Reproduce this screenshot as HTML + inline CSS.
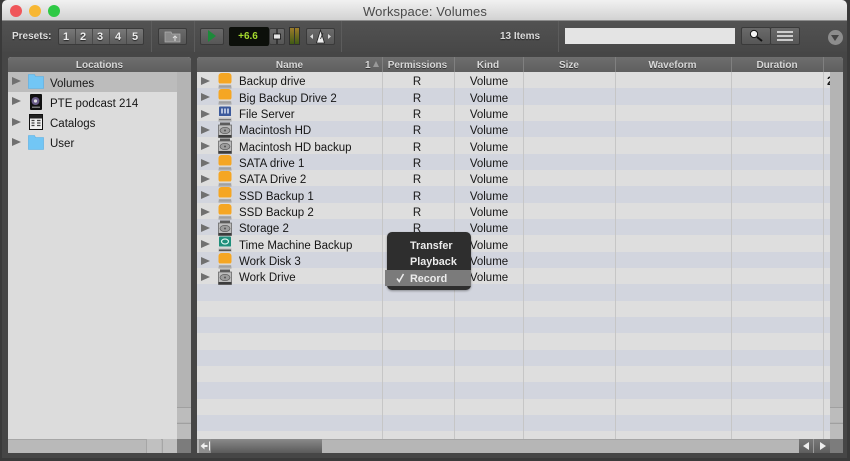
<!DOCTYPE html>
<html><head><meta charset="utf-8"><style>
*{box-sizing:border-box}
html,body{margin:0;padding:0;width:850px;height:461px;overflow:hidden;background:#3a3a3a}
body{font-family:"Liberation Sans",sans-serif;position:relative}
.a{position:absolute}
#w{position:absolute;left:0;top:0;width:850px;height:461px;overflow:hidden;filter:blur(.3px)}
.t{position:absolute;white-space:nowrap;line-height:14px;height:14px}
.l{font-size:11.5px;color:#161616;margin-top:2px}
.c{font-size:11.5px;color:#161616;text-align:center;margin-top:2px}
.h{font-size:10px;font-weight:bold;color:#d8d8d8;text-align:center;top:59px;text-shadow:0 1px 0 #333}
.b{position:absolute;background:linear-gradient(#6a6a6a,#565656);border:1px solid #3a3a3a;border-radius:2px}
.n{position:absolute;top:29px;height:15px;width:16px;text-align:center;color:#eee;font-size:11px;font-weight:bold;line-height:16px;text-shadow:0 1px 1px #222}
.r{position:absolute;left:197px;width:646px;height:16.33px}
.s{position:absolute;top:72px;height:367px;width:1px;background:#c6c6c6}
.ar{position:absolute;width:0;height:0;border-left:9px solid #707070;border-top:4.500px solid transparent;border-bottom:4.500px solid transparent}
.ic{position:absolute;width:14px;height:16px}
.p{position:absolute;left:410px;font-size:10.8px;font-weight:bold;color:#ececec;line-height:14px;margin-top:1px}
</style></head><body><div id="w">
<svg width="0" height="0" style="position:absolute"><defs>
<linearGradient id="gb" x1="0" y1="0" x2="0" y2="1"><stop offset="0" stop-color="#e6e6e6"/><stop offset="1" stop-color="#9c9c9c"/></linearGradient>
<symbol id="or" viewBox="0 0 14 16"><rect x="0.500" y="0" width="13" height="11.500" rx="3" fill="#f5a623"/><rect x="0.500" y="10.500" width="13" height="5" fill="url(#gb)"/><rect x="1" y="12.500" width="12" height="1" fill="#8c8c8c"/></symbol>
<symbol id="hd" viewBox="0 0 14 16"><rect x="2" y="0.500" width="10" height="3" fill="#5c5c5c"/><rect x="0.500" y="3" width="13" height="12.500" fill="#bdbdbd" stroke="#5c5c5c" stroke-width=".7"/><ellipse cx="7" cy="8.500" rx="5" ry="3.200" fill="#9c9c9c" stroke="#555" stroke-width=".7"/><circle cx="7" cy="8.500" r="1" fill="#555"/><rect x="0.500" y="13" width="13" height="2.500" fill="#3c3c3c"/></symbol>
<symbol id="sv" viewBox="0 0 14 16"><rect x="1" y="0.500" width="12" height="10" rx="1" fill="#3c5a9c"/><path d="M4 2.500v5M7 2.500v5M10 2.500v5" stroke="#dfe6f5" stroke-width="1.500"/><rect x="0.500" y="10" width="13" height="5.500" fill="url(#gb)"/><rect x="1" y="13" width="12" height="1" fill="#777"/></symbol>
<symbol id="tm" viewBox="0 0 14 16"><rect x="1" y="0.500" width="12" height="10.500" rx="1" fill="#1f8f7c"/><ellipse cx="7" cy="5.500" rx="3.500" ry="2.500" fill="none" stroke="#d8f3ec" stroke-width="1.200"/><rect x="0.500" y="10.500" width="13" height="5" fill="url(#gb)"/><rect x="1" y="13.500" width="12" height="1.500" fill="#555"/></symbol>
<symbol id="fo" viewBox="0 0 16 15"><path d="M0.500 0.500h6l1 2h8v12h-15z" fill="#72c6f5" stroke="#55ade4" stroke-width=".6"/></symbol>
</defs></svg>

<!-- window -->
<div class="a" style="left:2px;top:0;width:845px;height:458px;background:#464646;border-radius:5px 5px 0 0"></div>
<div class="a" style="left:2px;top:0;width:845px;height:21px;background:linear-gradient(#f1f1f1,#d2d2d2);border-radius:5px 5px 0 0;border-bottom:1px solid #8c8c8c"></div>
<div class="a" style="left:10px;top:5px;width:12px;height:12px;border-radius:50%;background:#f0565a"></div>
<div class="a" style="left:29px;top:5px;width:12px;height:12px;border-radius:50%;background:#f7b733"></div>
<div class="a" style="left:48px;top:5px;width:12px;height:12px;border-radius:50%;background:#2fc945"></div>
<div class="t" style="left:300px;width:250px;top:5px;text-align:center;font-size:13px;color:#4a4a4a;letter-spacing:.12px">Workspace: Volumes</div>

<!-- toolbar -->
<div class="a" style="left:2px;top:21px;width:845px;height:31px;background:linear-gradient(#525252,#474747)"></div>
<div class="t" style="left:12px;top:30px;font-size:10px;font-weight:bold;color:#e0e0e0;text-shadow:0 1px 1px #222">Presets:</div>
<div class="b" style="left:58px;top:28px;width:86px;height:17px;background:linear-gradient(#787878,#5c5c5c)"></div>
<div class="n" style="left:58px">1</div><div class="n" style="left:75px">2</div><div class="n" style="left:92px">3</div><div class="n" style="left:110px">4</div><div class="n" style="left:127px">5</div>
<div class="a" style="left:75px;top:29px;width:1px;height:15px;background:#4a4a4a"></div><div class="a" style="left:92px;top:29px;width:1px;height:15px;background:#4a4a4a"></div><div class="a" style="left:109px;top:29px;width:1px;height:15px;background:#4a4a4a"></div><div class="a" style="left:126px;top:29px;width:1px;height:15px;background:#4a4a4a"></div>
<div class="a" style="left:151px;top:21px;width:1px;height:31px;background:#5c5c5c"></div>
<div class="b" style="left:158px;top:28px;width:29px;height:17px"></div>
<svg class="a" style="left:164px;top:29px" width="17" height="15" viewBox="0 0 17 15"><path d="M1 3h6l1 2h8v8H1z" fill="#8a8a8a" stroke="#b0b0b0" stroke-width=".7"/><path d="M11 12V7M9 9l2-2 2 2" stroke="#ddd" fill="none" stroke-width="1"/></svg>
<div class="a" style="left:194px;top:21px;width:1px;height:31px;background:#5c5c5c"></div>
<div class="b" style="left:200px;top:28px;width:24px;height:17px"></div>
<div class="a" style="left:208px;top:30px;width:0;height:0;border-left:8px solid #1c8a3a;border-top:6.500px solid transparent;border-bottom:6.500px solid transparent"></div>
<div class="a" style="left:229px;top:27px;width:40px;height:19px;background:#0c0f0a;border-radius:2px"></div>
<div class="t" style="left:229px;top:30px;width:38px;text-align:center;font-size:10px;font-weight:bold;color:#a6dc2e">+6.6</div>
<div class="b" style="left:269px;top:28px;width:16px;height:17px"></div>
<svg class="a" style="left:272px;top:29px" width="10" height="15"><path d="M5 0v15" stroke="#111" stroke-width="1"/><rect x="1.500" y="5" width="7" height="5" fill="#e4e4e4" stroke="#111" stroke-width=".8"/></svg>
<div class="a" style="left:289px;top:27px;width:11px;height:18px;background:linear-gradient(#9c7c2a,#3f5a14);border:1px solid #2f2f2f"></div>
<div class="a" style="left:294px;top:27px;width:1px;height:18px;background:#333"></div>
<div class="b" style="left:306px;top:28px;width:29px;height:17px"></div>
<svg class="a" style="left:308px;top:29px" width="25" height="15"><path d="M2 7.500l3-2.500v5zM23 7.500l-3-2.500v5z" fill="#ddd"/><path d="M12.500 1l-4 13h8z" fill="#eee" stroke="#222" stroke-width=".8"/><path d="M12.500 10l2.500-6" stroke="#222" stroke-width=".8"/></svg>
<div class="a" style="left:341px;top:21px;width:1px;height:31px;background:#5c5c5c"></div>
<div class="t" style="left:500px;top:30px;font-size:10px;font-weight:bold;color:#dcdcdc;text-shadow:0 1px 1px #222">13 Items</div>
<div class="a" style="left:558px;top:21px;width:1px;height:31px;background:#5c5c5c"></div>
<div class="a" style="left:565px;top:28px;width:170px;height:16px;background:#e4e4e4"></div>
<div class="b" style="left:741px;top:27px;width:30px;height:18px"></div>
<svg class="a" style="left:748px;top:28px" width="16" height="15"><circle cx="6" cy="6" r="3.600" fill="#f4f4f4" stroke="#111" stroke-width="1"/><path d="M9 9l5 4" stroke="#111" stroke-width="2"/></svg>
<div class="b" style="left:770px;top:27px;width:30px;height:18px"></div>
<svg class="a" style="left:777px;top:30px" width="16" height="12"><path d="M0 2h16M0 6h16M0 10h16" stroke="#f0f0f0" stroke-width="1.400"/></svg>
<div class="a" style="left:828px;top:30px;width:15px;height:15px;border-radius:50%;background:#8d8d8d"></div>
<div class="a" style="left:831px;top:35px;width:0;height:0;border-top:6px solid #444;border-left:4.500px solid transparent;border-right:4.500px solid transparent"></div>

<!-- left panel -->
<div class="a" style="left:8px;top:57px;width:183px;height:396px;background:#dcdcdc;border-radius:3px 3px 0 0;overflow:hidden"></div>
<div class="a" style="left:8px;top:57px;width:183px;height:15px;background:linear-gradient(#6e6e6e,#5e5e5e);border-radius:3px 3px 0 0"></div>
<div class="t h" style="left:8px;width:183px">Locations</div>
<div class="a" style="left:8px;top:72px;width:169px;height:20px;background:#bcbcbc"></div>
<div class="a" style="left:177px;top:72px;width:14px;height:367px;background:#b4b4b4"></div>
<div class="a" style="left:177px;top:407px;width:14px;height:15px;background:#bcbcbc;border-top:1px solid #a0a0a0"></div>
<div class="a" style="left:177px;top:423px;width:14px;height:16px;background:#bcbcbc;border-top:1px solid #a0a0a0"></div>
<div class="a" style="left:8px;top:439px;width:169px;height:14px;background:#b9b9b9;border-top:1px solid #a6a6a6"></div>
<div class="a" style="left:146px;top:439px;width:15px;height:14px;background:#c0c0c0;border-left:1px solid #a6a6a6"></div>
<div class="a" style="left:162px;top:439px;width:15px;height:14px;background:#c0c0c0;border-left:1px solid #a6a6a6"></div>
<div class="a" style="left:177px;top:439px;width:14px;height:14px;background:#7c7c7c"></div>

<div class="ar" style="left:12px;top:77px"></div>
<div class="ar" style="left:12px;top:97px"></div>
<div class="ar" style="left:12px;top:118px"></div>
<div class="ar" style="left:12px;top:138px"></div>
<svg class="a" style="left:28px;top:74px" width="16" height="15"><use href="#fo"/></svg>
<svg class="a" style="left:29px;top:93px" width="14" height="18" viewBox="0 0 14 18"><rect x="1" y="1" width="12" height="16" rx="1" fill="#111"/><circle cx="6.500" cy="8" r="4" fill="#675a86"/><circle cx="6.500" cy="8" r="1.600" fill="#ddd"/><rect x="3" y="13.500" width="8" height="1.500" fill="#777"/></svg>
<svg class="a" style="left:29px;top:114px" width="14" height="16" viewBox="0 0 14 16"><rect x="0.500" y="0.500" width="13" height="15" fill="#f0f0f0" stroke="#111"/><rect x="1" y="1" width="12" height="3.500" fill="#222"/><path d="M2.500 6.500h3M8 6.500h3.500M2.500 9h3M8 9h3.500M2.500 11.500h3M8 11.500h3.500" stroke="#444" stroke-width="1.200"/></svg>
<svg class="a" style="left:28px;top:135px" width="16" height="15"><use href="#fo"/></svg>
<div class="t l" style="left:50px;top:75px">Volumes</div>
<div class="t l" style="left:50px;top:95px">PTE podcast 214</div>
<div class="t l" style="left:50px;top:115px">Catalogs</div>
<div class="t l" style="left:50px;top:135px">User</div>

<!-- right panel -->
<div class="a" style="left:197px;top:57px;width:646px;height:396px;background:#dedede;border-radius:3px 3px 0 0"></div>
<div class="a" style="left:197px;top:57px;width:646px;height:15px;background:linear-gradient(#6e6e6e,#5e5e5e);border-radius:3px 3px 0 0"></div>

<div class="r" style="top:88.33px;background:#d2d5de"></div>
<div class="r" style="top:121px;background:#d2d5de"></div>
<div class="r" style="top:153.67px;background:#d2d5de"></div>
<div class="r" style="top:186.33px;background:#d2d5de"></div>
<div class="r" style="top:219px;background:#d2d5de"></div>
<div class="r" style="top:251.67px;background:#d2d5de"></div>
<div class="r" style="top:284.33px;background:#d2d5de"></div>
<div class="r" style="top:317px;background:#d2d5de"></div>
<div class="r" style="top:349.67px;background:#d2d5de"></div>
<div class="r" style="top:382.33px;background:#d2d5de"></div>
<div class="r" style="top:415px;background:#d2d5de"></div>

<div class="s" style="left:382px"></div><div class="s" style="left:454px"></div><div class="s" style="left:523px"></div><div class="s" style="left:615px"></div><div class="s" style="left:731px"></div><div class="s" style="left:823px"></div>
<div class="a" style="left:382px;top:57px;width:1px;height:15px;background:#808080"></div><div class="a" style="left:454px;top:57px;width:1px;height:15px;background:#808080"></div><div class="a" style="left:523px;top:57px;width:1px;height:15px;background:#808080"></div><div class="a" style="left:615px;top:57px;width:1px;height:15px;background:#808080"></div><div class="a" style="left:731px;top:57px;width:1px;height:15px;background:#808080"></div><div class="a" style="left:823px;top:57px;width:1px;height:15px;background:#808080"></div>
<div class="t h" style="left:197px;width:185px">Name</div>
<div class="t h" style="left:365px;text-align:left">1</div>
<div class="a" style="left:373px;top:61px;width:0;height:0;border-bottom:6px solid #999;border-left:3.500px solid transparent;border-right:3.500px solid transparent"></div>
<div class="t h" style="left:383px;width:69px">Permissions</div>
<div class="t h" style="left:455px;width:66px">Kind</div>
<div class="t h" style="left:524px;width:90px">Size</div>
<div class="t h" style="left:616px;width:113px">Waveform</div>
<div class="t h" style="left:732px;width:90px">Duration</div>

<div class="a" style="left:830px;top:72px;width:13px;height:367px;background:#b4b4b4"></div>
<div class="a" style="left:830px;top:407px;width:13px;height:15px;background:#bcbcbc;border-top:1px solid #a0a0a0"></div>
<div class="a" style="left:830px;top:423px;width:13px;height:16px;background:#bcbcbc;border-top:1px solid #a0a0a0"></div>
<div class="t c" style="left:827px;top:73px;width:3px;overflow:hidden;text-align:left;font-weight:bold">2</div>

<div class="a" style="left:197px;top:439px;width:646px;height:14px;background:#b6b6b6;border-top:1px solid #a6a6a6"></div>
<div class="a" style="left:199px;top:439px;width:12px;height:14px;background:#8e8e8e"></div>
<svg class="a" style="left:200px;top:441px" width="11" height="10"><path d="M0.500 5l4-3.500v2.500h3v2h-3v2.500z" fill="#f0f0f0"/><path d="M9.500 0.500v9" stroke="#f0f0f0" stroke-width="1"/></svg>
<div class="a" style="left:211px;top:439px;width:111px;height:14px;background:linear-gradient(#8a8a8a,#5a5a5a)"></div>
<div class="a" style="left:799px;top:439px;width:31px;height:14px;background:linear-gradient(#787878,#5e5e5e)"></div>
<div class="a" style="left:813px;top:439px;width:1px;height:14px;background:#9a9a9a"></div>
<div class="a" style="left:803px;top:442px;width:0;height:0;border-right:6px solid #eee;border-top:4px solid transparent;border-bottom:4px solid transparent"></div>
<div class="a" style="left:820px;top:442px;width:0;height:0;border-left:6px solid #eee;border-top:4px solid transparent;border-bottom:4px solid transparent"></div>
<div class="a" style="left:830px;top:439px;width:13px;height:14px;background:#7c7c7c"></div>

<!-- rows -->
<div class="ar" style="left:201px;top:76.500px"></div><svg class="ic" style="left:218px;top:73px"><use href="#or"/></svg><div class="t l" style="left:239px;top:73px">Backup drive</div><div class="t c" style="left:383px;top:73px;width:68px">R</div><div class="t c" style="left:455px;top:73px;width:68px">Volume</div>
<div class="ar" style="left:201px;top:93px"></div><svg class="ic" style="left:218px;top:89px"><use href="#or"/></svg><div class="t l" style="left:239px;top:90px">Big Backup Drive 2</div><div class="t c" style="left:383px;top:90px;width:68px">R</div><div class="t c" style="left:455px;top:90px;width:68px">Volume</div>
<div class="ar" style="left:201px;top:109.500px"></div><svg class="ic" style="left:218px;top:106px"><use href="#sv"/></svg><div class="t l" style="left:239px;top:106px">File Server</div><div class="t c" style="left:383px;top:106px;width:68px">R</div><div class="t c" style="left:455px;top:106px;width:68px">Volume</div>
<div class="ar" style="left:201px;top:125.500px"></div><svg class="ic" style="left:218px;top:122px"><use href="#hd"/></svg><div class="t l" style="left:239px;top:122px">Macintosh HD</div><div class="t c" style="left:383px;top:122px;width:68px">R</div><div class="t c" style="left:455px;top:122px;width:68px">Volume</div>
<div class="ar" style="left:201px;top:142px"></div><svg class="ic" style="left:218px;top:138px"><use href="#hd"/></svg><div class="t l" style="left:239px;top:139px">Macintosh HD backup</div><div class="t c" style="left:383px;top:139px;width:68px">R</div><div class="t c" style="left:455px;top:139px;width:68px">Volume</div>
<div class="ar" style="left:201px;top:158.500px"></div><svg class="ic" style="left:218px;top:155px"><use href="#or"/></svg><div class="t l" style="left:239px;top:155px">SATA drive 1</div><div class="t c" style="left:383px;top:155px;width:68px">R</div><div class="t c" style="left:455px;top:155px;width:68px">Volume</div>
<div class="ar" style="left:201px;top:174.500px"></div><svg class="ic" style="left:218px;top:171px"><use href="#or"/></svg><div class="t l" style="left:239px;top:171px">SATA Drive 2</div><div class="t c" style="left:383px;top:171px;width:68px">R</div><div class="t c" style="left:455px;top:171px;width:68px">Volume</div>
<div class="ar" style="left:201px;top:191px"></div><svg class="ic" style="left:218px;top:187px"><use href="#or"/></svg><div class="t l" style="left:239px;top:188px">SSD Backup 1</div><div class="t c" style="left:383px;top:188px;width:68px">R</div><div class="t c" style="left:455px;top:188px;width:68px">Volume</div>
<div class="ar" style="left:201px;top:207.500px"></div><svg class="ic" style="left:218px;top:204px"><use href="#or"/></svg><div class="t l" style="left:239px;top:204px">SSD Backup 2</div><div class="t c" style="left:383px;top:204px;width:68px">R</div><div class="t c" style="left:455px;top:204px;width:68px">Volume</div>
<div class="ar" style="left:201px;top:223.500px"></div><svg class="ic" style="left:218px;top:220px"><use href="#hd"/></svg><div class="t l" style="left:239px;top:220px">Storage 2</div><div class="t c" style="left:383px;top:220px;width:68px">R</div><div class="t c" style="left:455px;top:220px;width:68px">Volume</div>
<div class="ar" style="left:201px;top:240px"></div><svg class="ic" style="left:218px;top:236px"><use href="#tm"/></svg><div class="t l" style="left:239px;top:237px">Time Machine Backup</div><div class="t c" style="left:455px;top:237px;width:68px">Volume</div>
<div class="ar" style="left:201px;top:256.500px"></div><svg class="ic" style="left:218px;top:253px"><use href="#or"/></svg><div class="t l" style="left:239px;top:253px">Work Disk 3</div><div class="t c" style="left:455px;top:253px;width:68px">Volume</div>
<div class="ar" style="left:201px;top:272.500px"></div><svg class="ic" style="left:218px;top:269px"><use href="#hd"/></svg><div class="t l" style="left:239px;top:269px">Work Drive</div><div class="t c" style="left:455px;top:269px;width:68px">Volume</div>

<!-- popup -->
<div class="a" style="left:387px;top:232px;width:84px;height:58px;background:#2e2e2e;border-radius:5px;box-shadow:0 1px 2px rgba(0,0,0,.35)"></div>
<div class="a" style="left:385px;top:269.500px;width:86px;height:16.500px;background:#7b7b7b"></div>
<div class="p" style="top:238px">Transfer</div>
<div class="p" style="top:254px">Playback</div>
<div class="p" style="top:270.500px">Record</div>
<svg class="a" style="left:396px;top:273px" width="9" height="10"><path d="M1 5.500l2.200 3L7.500 1" stroke="#eee" stroke-width="1.500" fill="none"/></svg>
</div></body></html>
